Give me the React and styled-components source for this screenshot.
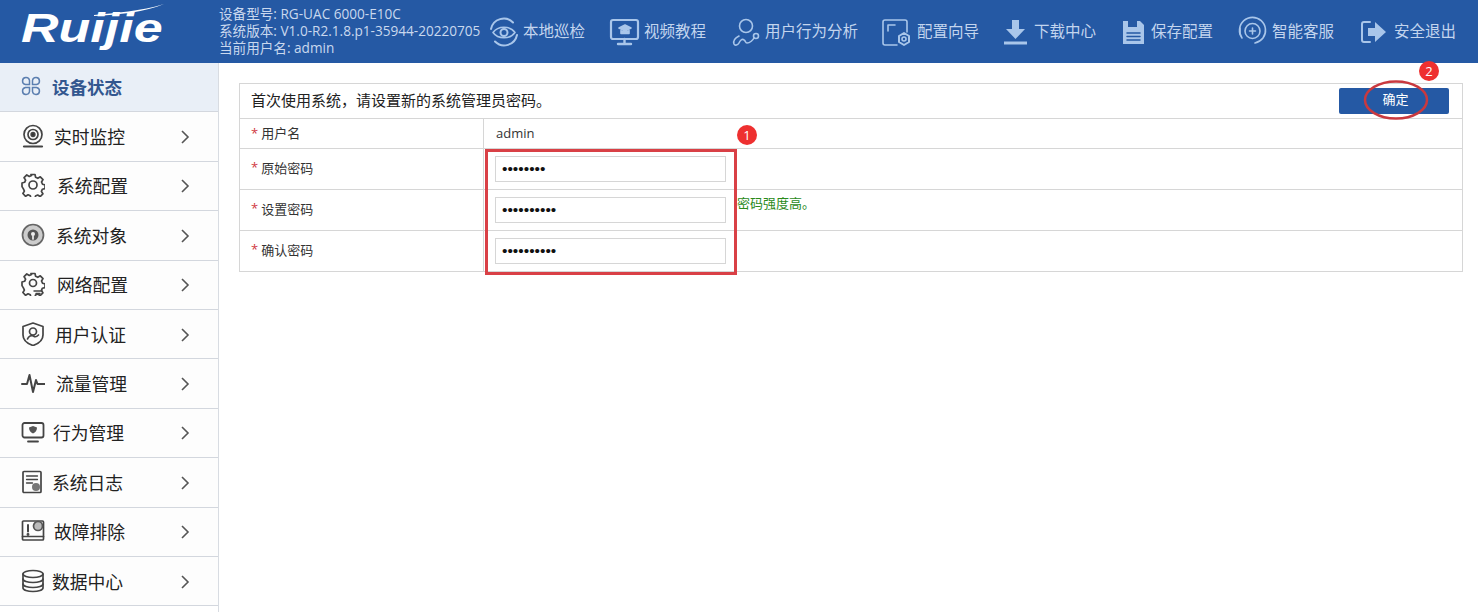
import styled, { createGlobalStyle } from "styled-components"

const GlobalStyle = createGlobalStyle`
    html, body { margin: 0; padding: 0; background: #fff; }
    body { font-family: "Open Sans", "Noto Sans CJK SC", sans-serif; overflow: hidden; }
`

const NavIcon = ({ w = 32, children }) => (
    <svg width={w} height="32" viewBox={`0 0 ${w} 32`} fill="none" stroke="#a9c6ea" strokeWidth="1.6" strokeLinecap="round" strokeLinejoin="round">
        {children}
    </svg>
)

const navItems = [
    { label: "本地巡检", gap: 3, icon: <NavIcon><path d="M3 13a13 13 0 0 1 22-6.500M29 19a13 13 0 0 1-22 6.500" strokeWidth="2"/><path d="M5 16.500c5-7 17-7 22 0-5 7-17 7-22 0z"/><circle cx="16" cy="16.500" r="3.500" strokeWidth="2"/></NavIcon> },
    { label: "视频教程", gap: 3, icon: <NavIcon><rect x="2" y="4" width="27" height="19" rx="2" strokeWidth="2.200"/><path d="M16 9l6 3-6 3-6-3z" fill="#a9c6ea"/><path d="M12 14.500v3h8v-3" fill="#a9c6ea"/><path d="M15.500 23v4M9 28h13" strokeWidth="2.400"/></NavIcon> },
    { label: "用户行为分析", gap: 3, icon: <NavIcon><circle cx="16" cy="10" r="6.500"/><path d="M9 20c-4 2-6 5-5 8 1 2 4 1 5-1 1-2 3-5 5-3 2 1 1 3 3 3 3 0 6-3 7-5"/><circle cx="26" cy="20" r="2.500"/></NavIcon> },
    { label: "配置向导", gap: 3, icon: <NavIcon><path d="M15 29H3a2 2 0 0 1-2-2V6a2 2 0 0 1 2-2h20a2 2 0 0 1 2 2v10"/><path d="M6 15V9h7"/><path d="M22 17l5 3v6l-5 3-5-3v-6z" strokeWidth="2"/><circle cx="22" cy="23" r="2"/></NavIcon> },
    { label: "下载中心", gap: 0, icon: <NavIcon w={31}><path d="M9 4h7v9h6l-9.500 10L3 13h6z" fill="#a9c6ea" stroke="none"/><path d="M1 27h23" strokeWidth="3" strokeLinecap="butt"/></NavIcon> },
    { label: "保存配置", gap: 0, icon: <NavIcon w={31}><path d="M3 5h17l4 4v19H3z" fill="#a9c6ea" stroke="none"/><path d="M8 5h9v6H8z" fill="#2559a4" stroke="none"/><path d="M7 17h13M7 20.500h13M7 24h13" stroke="#2559a4" strokeWidth="1.500"/></NavIcon> },
    { label: "智能客服", gap: 3, icon: <NavIcon><path d="M5 22a13 13 0 1 1 21 0c-1.500 2-4 4-8 5"/><circle cx="15.500" cy="15" r="7.500"/><path d="M15.500 12v6M12.500 15h6"/><path d="M3 12v6"/></NavIcon> },
    { label: "安全退出", gap: 4, icon: <NavIcon><path d="M12 6H6a2 2 0 0 0-2 2v16a2 2 0 0 0 2 2h6" strokeWidth="2"/><path d="M10 12h7V6l11 10-11 10v-6h-7z" fill="#a9c6ea" stroke="none"/></NavIcon> },
]

const SideIcon = ({ children }) => (
    <svg width="24" height="24" viewBox="0 0 24 24" fill="none" stroke="#444" strokeWidth="1.700" strokeLinejoin="round" strokeLinecap="round">
        {children}
    </svg>
)

const gearPath = "M10 2h4l.6 2.800 2.200 1 2.500-1.500 2.700 2.800-1.500 2.400 1 2.200 2.500.7v3.600l-2.600.7-1 2.200 1.500 2.400-2.700 2.800-2.500-1.500-2.200 1-.6 2.300h-4l-.6-2.600-2.200-1-2.500 1.500-2.700-2.800 1.500-2.400-1-2.200L1 14.100v-3.600l2.600-.7 1-2.200L3.100 5.200l2.700-2.800 2.500 1.500 2.200-1z"

const sideItems = [
    { label: "实时监控", gap: 9, icon: <SideIcon><circle cx="12" cy="10.500" r="9"/><circle cx="12" cy="10.500" r="5"/><circle cx="12" cy="10.500" r="1.800" fill="#333"/><path d="M3 22.500h18" strokeWidth="2.200"/></SideIcon> },
    { label: "系统配置", gap: 12, icon: <SideIcon><path d={gearPath} transform="translate(0 -.5)"/><circle cx="12" cy="12" r="4"/></SideIcon> },
    { label: "系统对象", gap: 11, icon: <SideIcon><circle cx="12" cy="12" r="10.500" fill="#ccc" stroke="#666"/><circle cx="12" cy="12" r="5.500" fill="#555" stroke="none"/><circle cx="12" cy="11" r="2" fill="#eee" stroke="none"/><path d="M12 13v3" stroke="#eee"/></SideIcon> },
    { label: "网络配置", gap: 12, icon: <SideIcon><path d={gearPath} transform="translate(0 -.5)"/><circle cx="12" cy="11" r="3.500"/><path d="M13 19h8M15 21.500h4" strokeWidth="1.400"/></SideIcon> },
    { label: "用户认证", gap: 10, icon: <SideIcon><path d="M12 1l10 3.500V13c0 5-4 8.500-10 10.500C6 21.500 2 18 2 13V4.500z"/><circle cx="12" cy="9.500" r="3.500"/><path d="M6.500 17c1-3 4-4 6-3 2 1.500 3 1 5-1"/></SideIcon> },
    { label: "流量管理", gap: 11, icon: <SideIcon><path d="M1 13h5l2.500-9 3.500 17 3-12 1.500 4h7" strokeWidth="2"/></SideIcon> },
    { label: "行为管理", gap: 8, icon: <SideIcon><rect x="1.500" y="3" width="21" height="14.500" rx="2" strokeWidth="1.800"/><path d="M12 6l4 1.500c0 3-1.500 5-4 6-2.500-1-4-3-4-6z" fill="#555" stroke="none"/><path d="M7 21.500h10" strokeWidth="1.800"/></SideIcon> },
    { label: "系统日志", gap: 7, icon: <SideIcon><rect x="2" y="1.500" width="18" height="21" rx="1"/><path d="M5.500 6h11M5.500 9.500h11M5.500 13h6" strokeWidth="1.300"/><circle cx="15" cy="17" r="4" fill="#777" stroke="none"/></SideIcon> },
    { label: "故障排除", gap: 9, icon: <SideIcon><rect x="1.500" y="2" width="21" height="19" rx="1"/><path d="M7 6v6.500" strokeWidth="2"/><circle cx="7" cy="15.500" r=".6" fill="#333"/><circle cx="17" cy="7" r="4.500" fill="#bbb" stroke="#555"/><path d="M1.500 17.500h21" /></SideIcon> },
    { label: "数据中心", gap: 7, icon: <SideIcon><ellipse cx="12" cy="5" rx="10" ry="3.500"/><path d="M2 5v14c0 2 4.500 3.500 10 3.500S22 21 22 19V5"/><path d="M2 10c0 2 4.500 3.500 10 3.500S22 12 22 10M2 15c0 2 4.500 3.500 10 3.500S22 17 22 15"/></SideIcon> },
]

const Chevron = () => (
    <ChevronIcon width="10" height="16" viewBox="0 0 10 16" fill="none" stroke="#555" strokeWidth="1.600">
        <path d="M2 2l6 6-6 6"/>
    </ChevronIcon>
)

const fields = [
    { label: "原始密码", value: "12345678" },
    { label: "设置密码", value: "1234567890", note: "密码强度高。" },
    { label: "确认密码", value: "1234567890" },
]

const App = () => {
    return (
        <Page>
            <GlobalStyle />
            <Header>
                <LogoBox>
                    <Logo>Ruijie</Logo>
                    <Swoosh width="70" height="12" viewBox="0 0 70 12">
                        <path d="M0 11C20 9 48 7 70 0C52 8 24 11 0 12z" fill="#fff"/>
                    </Swoosh>
                </LogoBox>
                <DeviceInfo>
                    <div>设备型号: RG-UAC 6000-E10C</div>
                    <div>系统版本: V1.0-R2.1.8.p1-35944-20220705</div>
                    <div>当前用户名: admin</div>
                </DeviceInfo>
                <TopNav>
                    {navItems.map((item) => (
                        <TopLink key={item.label} $gap={item.gap}>
                            {item.icon}
                            <span>{item.label}</span>
                        </TopLink>
                    ))}
                </TopNav>
            </Header>

            <Body>
                <Sidebar>
                    <ActiveItem>
                        <svg width="22" height="22" viewBox="0 0 22 22" fill="none" stroke="#5c7fb0" strokeWidth="1.500">
                            <path d="M9.500 9.500H5.500a3.500 3.500 0 1 1 4-4zM12.500 9.500V5.500a3.500 3.500 0 1 1 4 4zM9.500 12.500v4a3.500 3.500 0 1 1-4-4zM12.500 12.500h4a3.500 3.500 0 1 1-4 4z"/>
                        </svg>
                        <span>设备状态</span>
                    </ActiveItem>
                    {sideItems.map((item) => (
                        <SideItem key={item.label}>
                            <SideLabel $gap={item.gap}>
                                {item.icon}
                                <span>{item.label}</span>
                            </SideLabel>
                            <Chevron />
                        </SideItem>
                    ))}
                </Sidebar>

                <Main>
                    <Panel>
                        <TitleRow>
                            <TitleText>首次使用系统，请设置新的系统管理员密码。</TitleText>
                            <ConfirmButton>确定</ConfirmButton>
                            <Ring width="68" height="42" viewBox="0 0 68 42" fill="none" stroke="#c9393f" strokeWidth="2.500">
                                <ellipse cx="34" cy="21" rx="31" ry="18.500"/>
                            </Ring>
                            <StepBadge $top={-23} $right={23}>2</StepBadge>
                        </TitleRow>
                        <NameRow>
                            <Label><Star>*</Star>用户名</Label>
                            <NameValue>admin</NameValue>
                            <StepBadge $top={6} $right={705}>1</StepBadge>
                        </NameRow>
                        <Fields>
                            {fields.map((field) => (
                                <FieldRow key={field.label}>
                                    <FieldLabel><Star>*</Star>{field.label}</FieldLabel>
                                    <InputCell>
                                        <PasswordInput type="password" value={field.value} readOnly />
                                        {field.note && <StrengthNote>{field.note}</StrengthNote>}
                                    </InputCell>
                                </FieldRow>
                            ))}
                            <Highlight />
                        </Fields>
                    </Panel>
                </Main>
            </Body>
        </Page>
    )
}
export default App

const Page = styled.div`
    width: 1478px;
    height: 612px;
    overflow: hidden;
    display: flex;
    flex-direction: column;
`

const Header = styled.div`
    height: 63px;
    flex: none;
    display: flex;
    align-items: center;
    background-color: #2559a4;
`

const LogoBox = styled.div`
    position: relative;
    width: 219px;
    flex: none;
    padding: 0 0 7px 21px;
    box-sizing: border-box;
`

const Logo = styled.div`
    display: inline-block;
    font-family: "Liberation Sans", sans-serif;
    font-size: 40px;
    font-weight: 700;
    font-style: italic;
    line-height: 42px;
    color: #fff;
    transform: scaleX(1.3);
    transform-origin: left center;
`

const Swoosh = styled.svg`
    position: absolute;
    top: -3px;
    left: 94px;
`

const DeviceInfo = styled.div`
    width: 269px;
    flex: none;
    padding-bottom: 2px;
    font-size: 13.600px;
    line-height: 17px;
    white-space: nowrap;
    color: #c9d8ee;
`

const TopNav = styled.div`
    display: flex;
    align-items: center;
    gap: 24px;

    span {
        padding-bottom: 2px;
    }
`

const TopLink = styled.div`
    display: flex;
    align-items: center;
    gap: ${(p) => p.$gap}px;
    font-size: 15.500px;
    white-space: nowrap;
    color: #c3d5ee;
`

const Body = styled.div`
    flex: 1;
    display: flex;
    min-height: 0;
`

const Sidebar = styled.div`
    width: 219px;
    flex: none;
    box-sizing: border-box;
    border-right: 1px solid #d8dce2;
`

const ActiveItem = styled.div`
    height: 49.400px;
    box-sizing: border-box;
    display: flex;
    align-items: center;
    gap: 10px;
    padding: 0 0 2px 20px;
    font-size: 17.500px;
    font-weight: 700;
    color: #33578f;
    background-color: #e9eff7;
    border-bottom: 1px solid #d3d7de;
`

const SideItem = styled.div`
    height: 49.400px;
    box-sizing: border-box;
    display: flex;
    align-items: center;
    justify-content: space-between;
    padding: 0 28px 1px 21px;
    background-color: #fdfdfd;
    border-bottom: 1px solid #d3d7de;
`

const SideLabel = styled.div`
    display: flex;
    align-items: center;
    gap: ${(p) => p.$gap}px;
    font-size: 17.800px;
    color: #222;
`

const ChevronIcon = styled.svg`
    flex: none;
    margin-top: 2px;
`

const Main = styled.div`
    flex: 1;
    padding: 20px 15px 0 20px;
`

const Panel = styled.div`
    border: 1px solid #d6d6d6;
    font-size: 13px;
    color: #333;
`

const TitleRow = styled.div`
    position: relative;
    height: 34px;
    display: flex;
    align-items: center;
    justify-content: space-between;
    padding: 0 13px 0 11px;
    font-size: 15px;
    color: #222;
    border-bottom: 1px solid #d6d6d6;
`

const TitleText = styled.span`
    padding-bottom: 4px;
`

const ConfirmButton = styled.button`
    width: 110px;
    height: 26px;
    padding: 0 0 6px 3px;
    border: none;
    border-radius: 2px;
    font-family: inherit;
    font-size: 13px;
    color: #fff;
    background-color: #2559a4;
`

const Ring = styled.svg`
    position: absolute;
    top: -5px;
    right: 32px;
`

const StepBadge = styled.div`
    position: absolute;
    top: ${(p) => p.$top}px;
    right: ${(p) => p.$right}px;
    width: 20px;
    height: 20px;
    border-radius: 50%;
    display: flex;
    align-items: center;
    justify-content: center;
    font-size: 13px;
    color: #fff;
    background-color: #ee3030;
`

const NameRow = styled.div`
    position: relative;
    height: 29px;
    display: grid;
    grid-template-columns: 244px 1fr;
    border-bottom: 1px solid #d6d6d6;
`

const Label = styled.div`
    display: flex;
    align-items: center;
    padding: 0 0 2px 11px;
    border-right: 1px solid #d6d6d6;
    color: #333;
`

const FieldLabel = styled(Label)`
    padding-bottom: 4px;
`

const Star = styled.span`
    margin-right: 3px;
    color: #d0383f;
`

const NameValue = styled.div`
    display: flex;
    align-items: center;
    padding: 0 0 2px 12px;
`

const Fields = styled.div`
    position: relative;
`

const FieldRow = styled.div`
    height: 41px;
    box-sizing: border-box;
    display: grid;
    grid-template-columns: 244px 1fr;
    border-bottom: 1px solid #d6d6d6;

    &:nth-child(3) {
        height: 40px;
        border-bottom: none;
    }
`

const InputCell = styled.div`
    display: flex;
    align-items: center;
    padding-left: 11px;
`

const PasswordInput = styled.input`
    width: 231px;
    height: 26px;
    box-sizing: border-box;
    padding: 0 6px;
    border: 1px solid #d6d6d6;
    outline: none;
    font-family: "Liberation Sans", sans-serif;
    font-size: 15.500px;
    color: #111;
`

const StrengthNote = styled.span`
    margin: -15px 0 0 11px;
    font-size: 13px;
    color: #2a8a1a;
`

const Highlight = styled.div`
    position: absolute;
    top: 0;
    left: 245px;
    width: 252px;
    height: 126px;
    box-sizing: border-box;
    border: 3px solid #d94046;
    pointer-events: none;
`
